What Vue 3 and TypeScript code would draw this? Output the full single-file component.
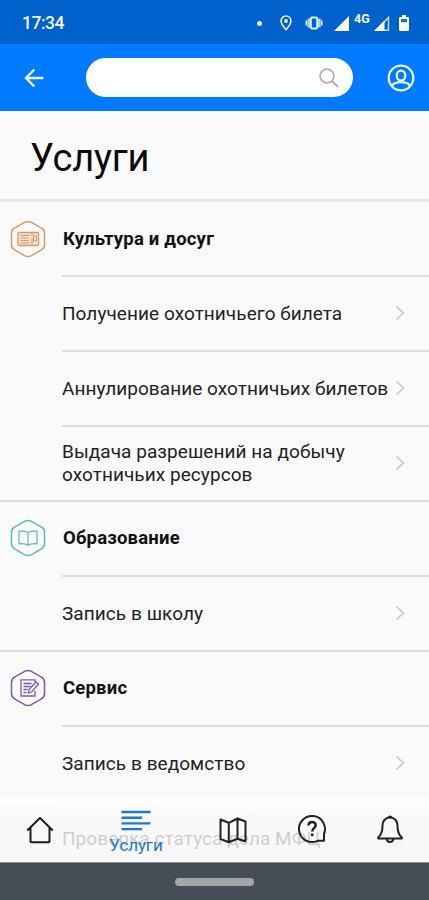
<script setup lang="ts">
interface Section {
  id: string
  title: string
  icon: 'ticket' | 'book' | 'note'
  services: string[]
}

const sections: Section[] = [
  {
    id: 'culture',
    title: 'Культура и досуг',
    icon: 'ticket',
    services: [
      'Получение охотничьего билета',
      'Аннулирование охотничьих билетов',
      'Выдача разрешений на добычу охотничьих ресурсов',
    ],
  },
  { id: 'education', title: 'Образование', icon: 'book', services: ['Запись в школу'] },
  {
    id: 'service',
    title: 'Сервис',
    icon: 'note',
    services: ['Запись в ведомство', 'Проверка статуса дела МФЦ'],
  },
]
</script>

<template>
  <div class="screen">
    <div class="status">
      <span class="clock">17:34</span>
      <div class="indicators">
        <i class="dot"></i>
        <svg class="pin" width="12" height="16" viewBox="0 0 12 16">
          <path d="M6 1a4.9 4.9 0 0 0-4.9 4.9C1.100 9 6 14.600 6 14.600S10.900 9 10.900 5.900A4.900 4.900 0 0 0 6 1z" fill="none" stroke="#e3f0ff" stroke-width="1.600" />
          <circle cx="6" cy="6" r="1.900" fill="#e3f0ff" />
        </svg>
        <svg class="vibrate" width="18" height="14" viewBox="0 0 18 14">
          <rect x="5.800" y="1.500" width="6.400" height="11" rx="1.200" fill="none" stroke="#d9f1fa" stroke-width="2" />
          <path d="M3.700 2.500v9M14.300 2.500v9" stroke="#a9d5ee" stroke-width="2.600" />
          <path d="M1.300 4.500v5M16.700 4.500v5" stroke="#d9f1fa" stroke-width="1.700" />
        </svg>
        <svg class="signal" width="15" height="15" viewBox="0 0 15 15"><path d="M15 0v15H0z" fill="#fff" /></svg>
        <span class="network">4G</span>
        <svg class="signal2" width="16" height="15" viewBox="0 0 16 15">
          <path d="M14.500 1.500v12.700H2z" fill="none" stroke="#b9dcfa" stroke-width="1.500" />
          <path d="M10.500 4.500V15H0z" fill="#fff" />
        </svg>
        <svg width="10" height="16" viewBox="0 0 10 16">
          <path d="M3 0h4v2h2q1 0 1 1v12q0 1-1 1H1q-1 0-1-1V3q0-1 1-1h2z" fill="#fff" />
          <path d="M2 4h6v3.300H2z" fill="#216fc6" />
        </svg>
      </div>
    </div>

    <header class="header">
      <svg class="back" width="20" height="20" viewBox="0 0 20 20">
        <path d="M10.300 1.500L2 10l8.300 8.500M2 10h17.500" fill="none" stroke="#e9f4ff" stroke-width="2.500" />
      </svg>
      <div class="search">
        <svg width="20" height="20" viewBox="0 0 20 20">
          <circle cx="8" cy="8" r="6.900" fill="none" stroke="#b2b2b2" stroke-width="1.700" />
          <path d="M13 13l6 6" stroke="#aaa" stroke-width="2" />
        </svg>
      </div>
      <svg class="profile" width="28" height="28" viewBox="0 0 28 28" fill="none" stroke="#e9f5ff" stroke-width="2.300">
        <circle cx="14" cy="14" r="12.300" />
        <ellipse cx="14" cy="11.600" rx="4.300" ry="5" />
        <path d="M5.200 21.500c2-2.700 5-3.300 8.800-3.300s6.800.6 8.800 3.300" />
      </svg>
    </header>

    <h1 class="title">Услуги</h1>

    <main class="list">
      <section v-for="section in sections" :key="section.id" class="section">
        <div class="group">
          <svg class="badge" :class="section.icon" width="36" height="38" viewBox="0 0 36 38" fill="none" stroke="currentColor">
            <path d="M15 2.200q3-1.500 6 0l10.500 6q3 1.800 3 5v11.600q0 3.200-3 5l-10.500 6q-3 1.500-6 0l-10.500-6q-3-1.800-3-5V13.200q0-3.200 3-5z" stroke-width="1.500" />
            <g v-if="section.icon === 'ticket'">
              <rect x="8" y="12.500" width="20.500" height="13" rx="1" fill="#f7e2d0" stroke-width="1.300" />
              <path d="M10.500 15.500h9M10.500 18h8M10.500 20.500h8M10.500 23h9M22 13v3M22 18v7" stroke-width="1.100" />
              <rect x="23.500" y="16" width="3" height="5" stroke-width="1" />
            </g>
            <g v-else-if="section.icon === 'book'" stroke-width="1.200">
              <path d="M18 13.500c-2-1.300-5-1.500-9-1.200v12.500c4-.3 7 0 9 1.400 2-1.400 5-1.700 9-1.400V12.300c-4-.3-7-.1-9 1.200zM18 13.500v12.700" />
            </g>
            <g v-else stroke-width="1.300">
              <path d="M25 13v-2.200H11V27h14v-5" />
              <path d="M13.500 14.500h8M13.500 17.500h7M13.500 20.500h4M13.500 23.500h3" />
              <path d="M19 20.500l7-7.500 2.500 2.200-7 7.800-3.200 1z" fill="#fafafa" />
            </g>
          </svg>
          <h2>{{ section.title }}</h2>
        </div>
        <div v-for="service in section.services" :key="service" class="service">
          <span>{{ service }}</span>
          <svg width="10" height="16" viewBox="0 0 10 16">
            <path d="M1.500 1.500L8.500 8l-7 6.500" fill="none" stroke="#c6c6c6" stroke-width="1.500" />
          </svg>
        </div>
      </section>
    </main>

    <div class="bottom">
      <nav class="tabs">
        <div class="tab home">
          <svg width="28" height="28" viewBox="0 0 28 28" fill="none" stroke="#1c1c1c" stroke-width="2">
            <path d="M1.200 14.500L14 2l12.800 12.500M4.500 12v13.200q0 1 1 1h17q1 0 1-1V12" stroke-linejoin="round" />
          </svg>
        </div>
        <div class="tab active">
          <svg width="30" height="22" viewBox="0 0 30 22" stroke="#1c78d2" stroke-width="2.400">
            <path d="M.5 2h29M.5 7.700h20.500M.5 13.400h29M.5 19.100h20.500" />
          </svg>
          <span>Услуги</span>
        </div>
        <div class="tab map">
          <svg width="28" height="28" viewBox="0 0 28 28" fill="none" stroke="#222" stroke-width="2" stroke-linejoin="round">
            <path d="M1.500 3.500l8.300 3.300 8.700-4.300 8 3v20l-8-2.700-8.700 3.400-8.300-3.200zM9.800 6.800v19.400M18.500 2.500v20.300" />
          </svg>
        </div>
        <div class="tab help">
          <svg width="30" height="30" viewBox="0 0 30 30" fill="none" stroke="#222" stroke-width="2">
            <path d="M20.500 26.800A13 13 0 1 1 27 20v6.800z" stroke-linejoin="round" />
            <path d="M11.500 11.500c0-5 7.200-4.500 7.200-.3 0 2.800-3.500 3.200-3.500 6.300" stroke-width="2.500" />
            <path d="M15.200 19.500v2.700" stroke-width="2.500" />
          </svg>
        </div>
        <div class="tab bell">
          <svg width="26" height="28" viewBox="0 0 26 28" fill="none" stroke="#222" stroke-width="2" stroke-linejoin="round">
            <path d="M13 2.500c-5 0-7.500 4-7.500 8 0 6-1 9.500-4.300 11.800v1.200h23.600v-1.200c-3.300-2.300-4.300-5.800-4.300-11.800 0-4-2.500-8-7.500-8z" />
            <path d="M11.300 2.700q1.700-2.300 3.400 0M9.800 24c.3 4 6.100 4 6.400 0" />
          </svg>
        </div>
      </nav>
      <div class="system"><i></i></div>
    </div>
  </div>
</template>

<style>
body {
  background: #fafafa;
  overflow: hidden;
}
</style>

<style scoped>
.screen {
  position: relative;
  width: 429px;
  height: 900px;
  overflow: hidden;
  background: #fafafa;
  color: #222;
  font-family: Roboto, sans-serif;
}
.screen * { box-sizing: border-box; }
svg { display: block; flex: none; }
.status {
  display: flex;
  align-items: center;
  justify-content: space-between;
  height: 44px;
  padding: 2px 20px 0 22px;
  background: #0061cd;
  color: #f2f8ff;
}
.clock { font-size: 17.5px; font-weight: 500; letter-spacing: -.5px; }
.indicators { display: flex; align-items: center; }
.dot { width: 5px; height: 5px; margin-right: 18px; border-radius: 50%; background: #e9f4ff; }
.vibrate { margin: 0 11px 0 13px; }
.network { width: 21px; margin: -8px 0 0 2px; padding-left: 3px; font-size: 12.5px; font-weight: 700; line-height: 12px; }
.signal2 { margin: 0 9px 0 2px; }
.header {
  display: flex;
  align-items: center;
  height: 67px;
  padding: 0 14px 0 24px;
  background: #007aff;
}
.search {
  display: flex;
  align-items: center;
  justify-content: flex-end;
  width: 267px;
  height: 39px;
  margin: 0 auto 0 42px;
  padding-right: 14px;
  border-radius: 20px;
  background: #fff;
}
.title {
  height: 91px;
  margin: 0;
  padding: 24px 0 0 30px;
  border-bottom: 3px solid #e6e6e6;
  color: #0a0a0a;
  font-size: 38px;
  font-weight: 400;
  line-height: 46px;
  letter-spacing: -.2px;
}
.list { margin-top: -1px; }
.group, .service {
  display: flex;
  align-items: center;
  height: 75px;
}
.group { padding-left: 10px; }
.badge { margin-right: 17px; }
.ticket { color: #d79a68; }
.book { color: #62b9aa; }
.note { color: #7c58b2; }
h2 {
  margin: 0;
  color: #111;
  font-size: 18.5px;
  font-weight: 700;
  line-height: 24px;
  letter-spacing: .2px;
}
.service {
  justify-content: space-between;
  height: 76px;
  margin-top: -1px;
  margin-left: 62px;
  padding: 0 24px 2px 0;
  border-top: 2px solid #dfdfdf;
  font-size: 19px;
  line-height: 23px;
  letter-spacing: .06px;
}
.service span { width: 334px; margin-right: -10px; }
.section + .section .group {
  height: 76px;
  margin-top: -1px;
  padding-bottom: 2px;
  border-top: 2px solid #dcdcdc;
}
.bottom { position: absolute; right: 0; bottom: 0; left: 0; }
.tabs {
  display: flex;
  height: 64px;
  background: linear-gradient(rgba(255, 255, 255, .98), rgba(248, 248, 248, .8) 28%);
}
.tab { display: flex; flex-direction: column; align-items: center; width: 80px; padding-top: 18px; }
.home { width: 79px; }
.active { width: 114px; padding-top: 12px; color: #1c78d2; font-size: 17px; line-height: 20px; letter-spacing: -.1px; }
.active span { margin-top: 3px; }
.map { width: 79px; }
.help { width: 79px; padding-top: 16px; }
.bell { width: 78px; padding-top: 17px; }
.system {
  display: flex;
  align-items: center;
  justify-content: center;
  height: 38px;
  border-top: 1px solid #8a8e92;
  background: #454d57;
}
.system i { width: 79px; height: 8px; border-radius: 4px; background: #a3a7aa; }
</style>
